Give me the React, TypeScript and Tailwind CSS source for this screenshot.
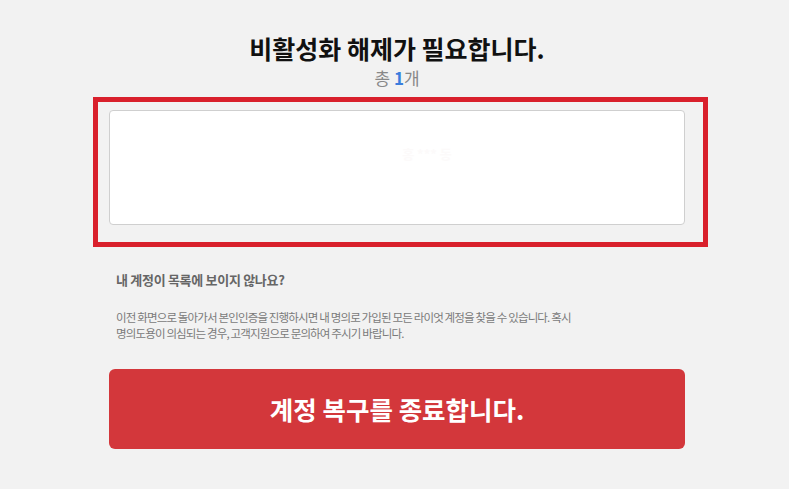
export default function App() {
    return (
        <div className="min-h-screen bg-[#f2f2f2] text-[#111]" style={{ fontFamily: '"Noto Sans CJK KR", "Noto Sans", sans-serif' }}>
            <div className="w-[576px] ml-[109px] pt-[32px]">
                <h1 className="text-center text-[25px] leading-[32px] font-bold text-[#111]">비활성화 해제가 필요합니다.</h1>
                <p className="text-center text-[17px] leading-[22px] text-[#888] mt-[3px]">
                    총 <span className="font-bold text-[#3b7ddd]">1</span>개
                </p>

                <div className="-ml-[16px] mt-[8px] w-[615px] h-[150px] border-[5px] border-[#d9202c] pt-[8px] pl-[11px]">
                    <div className="w-[576px] h-[115px] bg-white border border-[#cfcfcf] rounded-[4px] flex items-center justify-center">
                        <span className="ml-[60px] -mt-[28px] text-[13px] font-bold text-[#fcfafa]">홍 *** 동</span>
                    </div>
                </div>

                <div className="px-[7px] mt-[24px]">
                    <h3 className="text-[13px] leading-[18px] font-bold text-[#666] tracking-[-0.3px]">내 계정이 목록에 보이지 않나요?</h3>
                    <p className="mt-[20px] text-[11.5px] leading-[16px] text-[#7a7a7a] tracking-[-0.85px]">
                        이전 화면으로 돌아가서 본인인증을 진행하시면 내 명의로 가입된 모든 라이엇 계정을 찾을 수 있습니다. 혹시
                        <br />
                        명의도용이 의심되는 경우, 고객지원으로 문의하여 주시기 바랍니다.
                    </p>
                </div>

                <button className="mt-[28px] w-[576px] h-[80px] rounded-[6px] bg-[#d3373b] text-white text-[25.5px] font-bold flex items-center justify-center">
                    계정 복구를 종료합니다.
                </button>
            </div>
        </div>
    );
}
